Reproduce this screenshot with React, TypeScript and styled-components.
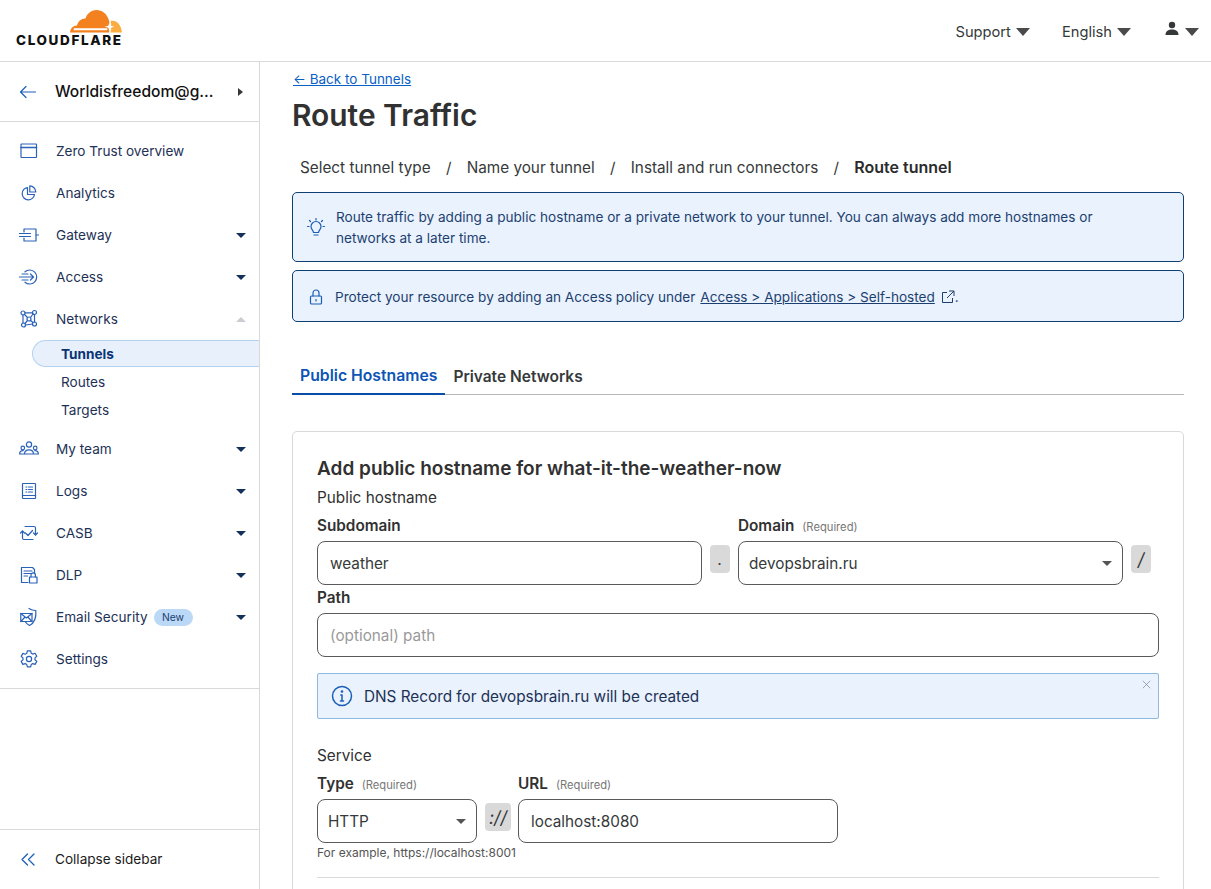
import React from "react";
import styled, { createGlobalStyle } from "styled-components";

const Global = createGlobalStyle`
  html, body { margin: 0; padding: 0; background: #fff; height: 100%; overflow: hidden; }
  body { font-family: Inter, "Liberation Sans", sans-serif; color: #313131; }
  #root { height: 100%; }
  * { box-sizing: border-box; }
`;

const Page = styled.div`
  width: 1211px; height: 889px; display: flex; flex-direction: column; overflow: hidden;
`;
const Header = styled.header`
  height: 62px; flex: none; display: flex; align-items: center; justify-content: space-between;
  border-bottom: 1px solid #d9d9d9; padding: 0 12px 0 16px;
`;
const Logo = styled.div`
  width: 106px; align-self: flex-start; padding-top: 10px; display: flex; flex-direction: column; align-items: flex-end;
`;
const LogoText = styled.span`
  font-family: Inter, "Liberation Sans", sans-serif; font-weight: 800; font-size: 13.5px; line-height: 11px;
  letter-spacing: 1.62px; color: #111; width: 106px; white-space: nowrap; margin-top: 2px;
`;
const HeaderMenu = styled.nav`
  display: flex; align-items: center; font-size: 14.7px; color: #36393a; padding-top: 2px;
`;
const HeaderItem = styled.span<{ $gap: number }>`
  display: flex; align-items: center; gap: 5px; margin-right: ${(p) => p.$gap}px;
`;
const UserIcon = styled.svg`
  width: 16px; height: 16px; margin-top: -5px;
`;
const Caret = styled.i<{ $w?: number; $h?: number; $c?: string; $up?: boolean }>`
  display: block; width: 0; height: 0;
  border-left: ${(p) => p.$w ?? 7}px solid transparent;
  border-right: ${(p) => p.$w ?? 7}px solid transparent;
  ${(p) => p.$up
    ? `border-bottom: ${p.$h ?? 8}px solid ${p.$c ?? "#4a4a4a"};`
    : `border-top: ${p.$h ?? 8}px solid ${p.$c ?? "#4a4a4a"};`}
`;
const Body = styled.div`
  display: flex; flex: 1; min-height: 0;
`;
const Sidebar = styled.aside`
  width: 260px; flex: none; border-right: 1px solid #d9d9d9; display: flex; flex-direction: column;
`;
const Account = styled.div`
  height: 60px; flex: none; display: flex; align-items: center; padding: 0 16px 0 19px;
  border-bottom: 1px solid #d9d9d9; font-size: 15.6px; font-weight: 500; color: #111;
`;
const AccountName = styled.span`
  flex: 1; margin-left: 18px; white-space: nowrap;
`;
const SideArrow = styled.i`
  display: block; width: 0; height: 0; border-top: 4px solid transparent; border-bottom: 4px solid transparent;
  border-left: 5px solid #36393a;
`;
const Nav = styled.nav`
  padding-top: 8px; padding-bottom: 8px; border-bottom: 1px solid #d9d9d9;
`;
const NavRow = styled.div`
  height: 42px; display: flex; align-items: center; padding: 0 13px 0 19px;
  font-size: 13.6px; color: #1d3156;
`;
const NavIcon = styled.svg`
  width: 20px; height: 20px; flex: none; margin-right: 17px; color: #2a62b8;
  fill: none; stroke: currentColor; stroke-width: 1.2; stroke-linecap: round; stroke-linejoin: round;
`;
const NavLabel = styled.span`
  flex: 1; display: flex; align-items: center; gap: 6px; white-space: nowrap;
`;
const Badge = styled.span`
  background: #bcd8f7; color: #1d3f70; font-size: 10.3px; font-weight: 400; line-height: 17px; height: 17px;
  padding: 0 8.5px; border-radius: 9px;
`;
const SubList = styled.div`
  display: flex; flex-direction: column; margin-bottom: 4px;
`;
const SubRow = styled.div<{ $active?: boolean }>`
  height: ${(p) => (p.$active ? 27 : 28)}px; margin-left: 32px; padding-left: ${(p) => (p.$active ? 28 : 29)}px;
  display: flex; align-items: center; font-size: 13.6px;
  color: ${(p) => (p.$active ? "#0a3475" : "#1d3156")};
  font-weight: ${(p) => (p.$active ? 700 : 400)};
  ${(p) => p.$active && `background:#e8f1fb;border:1px solid #b4d2f0;border-right:none;border-radius:14px 0 0 14px;margin-bottom:1px;`}
`;
const Spacer = styled.div`flex: 1;`;
const Collapse = styled.div`
  height: 60px; flex: none; border-top: 1px solid #d9d9d9; display: flex; align-items: center;
  padding: 0 0 2px 19px; font-size: 13.6px; color: #1b1b1b;
`;
const CollapseLabel = styled.span`margin-left: 18px;`;
const Main = styled.main`
  flex: 1; min-width: 0; padding: 9px 27px 0 32px; overflow: hidden;
`;
const BackLink = styled.a`
  display: block; font-size: 13.5px; line-height: 17px; color: #0a5fc4; text-decoration: underline; margin-left: 1px;
`;
const Title = styled.h1`
  font-size: 29.9px; font-weight: 600; line-height: 40px; margin: 7px 0 0; color: #313131;
`;
const Steps = styled.ol`
  list-style: none; margin: 22px 0 0; padding: 0 0 0 8px; display: flex; align-items: baseline; font-size: 15.3px; line-height: 20px; color: #36393a;
  height: 20px;
`;
const Step = styled.li<{ $current?: boolean }>`
  font-weight: ${(p) => (p.$current ? 600 : 400)};
  font-size: ${(p) => (p.$current ? 16 : 15.3)}px;
  color: ${(p) => (p.$current ? "#2b2b2b" : "#36393a")};
`;
const StepSep = styled.li`
  margin: 0 15.25px;
`;
const Callout = styled.div<{ $h: number; $gap: number; $pl: number }>`
  height: ${(p) => p.$h}px; margin-top: ${(p) => p.$gap}px; display: flex; align-items: center;
  padding-left: ${(p) => p.$pl}px; padding-top: 2px; background: #e9f2fd; border: 1px solid #0f3f73; border-radius: 5px;
  font-size: 13.6px; line-height: 21px; color: #1d3f70;
`;
const CalloutIcon = styled.svg<{ $mr: number }>`
  width: 20px; height: 20px; flex: none; margin-right: ${(p) => p.$mr}px; color: #1c5fb8;
  fill: none; stroke: currentColor; stroke-width: 1.2; stroke-linecap: round; stroke-linejoin: round;
`;
const CalloutText = styled.div`
  max-width: 790px;
`;
const CalloutLink = styled.a`
  text-decoration: underline; margin-left: 5px;
`;
const ExternalIcon = styled.svg`
  width: 14px; height: 14px; margin-left: 6px; fill: none; stroke: #1d3f70; stroke-width: 1;
`;
const TabBar = styled.div`
  margin-top: 34px; display: flex; height: 39px; border-bottom: 1px solid #b6b6b6;
`;
const Tab = styled.div<{ $active?: boolean }>`
  font-size: ${(p) => (p.$active ? 15.75 : 15.5)}px; font-weight: 600; padding: 0 8px; line-height: 42px; height: 39px;
  color: ${(p) => (p.$active ? "#0d55b5" : "#36393a")};
  ${(p) => p.$active && `border-bottom: 2px solid #0a4ea8;line-height:40px;`}
`;
const Card = styled.section`
  margin-top: 36px; border: 1px solid #d9d9d9; border-radius: 5px; padding: 25px 24px 0; height: 600px;
`;
const CardTitle = styled.h2`
  font-size: 19px; font-weight: 600; line-height: 24px; margin: 0; color: #313131;
`;
const Section = styled.div<{ $mt?: number }>`
  font-size: 15.3px; line-height: 22px; height: 20px; color: #313131; margin-top: ${(p) => p.$mt ?? 6}px;
`;
const FieldRow = styled.div<{ $mt?: number }>`
  display: flex; align-items: flex-start; margin-top: ${(p) => p.$mt ?? 8}px;
`;
const Field = styled.div<{ $w: number }>`
  width: ${(p) => p.$w}px; flex: none;
`;
const Label = styled.div`
  display: flex; align-items: baseline; gap: 8px; font-size: 15.3px; font-weight: 600; line-height: 22px; color: #313131; height: 20px;
`;
const Req = styled.span`
  font-size: 11.2px; font-weight: 400; color: #777;
`;
const InputBox = styled.div<{ $muted?: boolean }>`
  margin-top: 6px; height: 44px; border: 1px solid #5a5a5a; border-radius: 8px; background: #fff;
  display: flex; align-items: center; justify-content: space-between; padding: 0 10px 0 12px; font-size: 15.3px;
  color: ${(p) => (p.$muted ? "#9a9a9a" : "#36393a")};
`;
const SelectBox = styled(InputBox)`
  padding-left: 10px;
`;
const Addon = styled.div<{ $w: number; $ml: number; $mr: number; $size?: number }>`
  width: ${(p) => p.$w}px; height: 28px; margin: 30px ${(p) => p.$mr}px 0 ${(p) => p.$ml}px; flex: none; background: #d9d9d9; border-radius: 4px;
  display: flex; align-items: center; justify-content: center; font-size: ${(p) => p.$size ?? 16}px; color: #36393a; font-style: italic;
`;
const Notice = styled.div`
  position: relative; margin-top: 16px; height: 46px; display: flex; align-items: center; padding-left: 13px;
  background: #e9f2fd; border: 1px solid #8cb8e2; border-radius: 2px; font-size: 15.3px; color: #1d3156;
`;
const NoticeClose = styled.svg`
  position: absolute; top: 6px; right: 7px; width: 9px; height: 9px; stroke: #7d8a99; stroke-width: 0.9; fill: none;
`;
const NoticeIcon = styled.svg`
  width: 22px; height: 22px; flex: none; margin-right: 11px; fill: none; stroke: #1c5fb8; stroke-width: 1.5; stroke-linecap: round;
`;
const Hint = styled.div`
  font-size: 12px; line-height: 15px; color: #555; margin-top: 2px; white-space: nowrap;
`;
const Divider = styled.hr`
  border: 0; border-top: 1px solid #d9d9d9; margin: 17px 0 0;
`;

const navIcons: Record<string, React.ReactNode> = {
  overview: <><rect x="2" y="3" width="15.5" height="13.5" rx="0.5" /><path d="M2 6.5h15.5" strokeWidth="1.6" /></>,
  analytics: <><path d="M8.5 4.5a6.2 6.2 0 1 0 7 7h-7z" /><path d="M10.8 2.8a6.4 6.4 0 0 1 6 6.2h-6z" /></>,
  gateway: <><path d="M5 7V4h12v12H5v-3" /><path d="M0.5 8.5h11M0.5 11.5h11M17 10h2.5" /></>,
  access: <><path d="M6 4.8a7 7 0 1 1 0 10.4" /><path d="M3 7h6M0.5 10h14M3 13h6M11.5 7l3 3-3 3" /></>,
  networks: <><circle cx="4" cy="4" r="2" /><circle cx="15.5" cy="3.5" r="2" /><circle cx="4.5" cy="16" r="2" /><circle cx="15.5" cy="15" r="2" /><circle cx="10" cy="10" r="2" /><path d="M5.5 5.5 8.5 8.5M14 5 11.5 8.5M8.5 11.5 6 14.5M11.5 11.5 14 13.5M6 3.8h7.5M4 6v8M15.5 5.5v7.5M6.5 16l7-1" /></>,
  team: <><circle cx="10" cy="5.5" r="2.6" /><circle cx="3.8" cy="9" r="1.8" /><circle cx="16.2" cy="9" r="1.8" /><path d="M5.5 15c0-5.5 9-5.5 9 0zM0.6 15c0-2.8 2-3.6 3.6-3.3M19.4 15c0-2.8-2-3.6-3.6-3.3M0.6 15h4.9M14.5 15h4.9" /></>,
  logs: <><rect x="3.5" y="2.5" width="13" height="15" rx="0.5" /><path d="M3.5 14.5h13M7 6h.8M7 8.5h.8M7 11h.8M9.5 6h4M9.5 8.5h4M9.5 11h4" /></>,
  casb: <><path d="M6 3.5h9a1.5 1.5 0 0 1 1.5 1.5v7" /><path d="M14 16.5H5a1.5 1.5 0 0 1-1.5-1.5V8" /><path d="M1.5 10l2-2 2 2M14.5 10l2 2 2-2" /><path d="m6.5 10 2.5 2.5 4.5-5" /></>,
  dlp: <><path d="M9 17.5H2.5V2.5h11l2 2v4" /><path d="M5 6h8M5 8.5h8M5 11h3.5" /><rect x="10.5" y="12" width="7.5" height="6" /><path d="M12 12v-2a2.2 2.2 0 0 1 4.4 0v2" /></>,
  email: <><path d="M10 1.5c2 1.5 4.5 2 6.8 2 .6 6.5-1.5 12.5-6.3 15-1.5-.8-3-1.8-4-3.5" /><rect x="1.8" y="6.5" width="11.2" height="8" /><path d="m1.8 6.5 5.6 4.5 5.6-4.5M1.8 14.5 6 10M13 14.5 8.8 10" /></>,
  settings: <><circle cx="10" cy="10" r="2.6" /><path d="M8.3 1.8h3.4l.5 2.4 1.6.9 2.3-.8 1.7 3-1.8 1.6v1.9l1.8 1.6-1.7 3-2.3-.8-1.6.9-.5 2.4H8.3l-.5-2.4-1.6-.9-2.3.8-1.7-3 1.8-1.6V9l-1.8-1.6 1.7-3 2.3.8 1.6-.9z" /></>,
};

function NavItem({ icon, label, caret, up, badge }: { icon: string; label: string; caret?: boolean; up?: boolean; badge?: string }) {
  return (
    <NavRow>
      <NavIcon viewBox="0 0 20 20">{navIcons[icon]}</NavIcon>
      <NavLabel>{label}{badge && <Badge>{badge}</Badge>}</NavLabel>
      {caret && <Caret $w={5} $h={5} $c={up ? "#c9ced4" : "#14315c"} $up={up} />}
    </NavRow>
  );
}

export default function App() {
  return (
    <Page>
      <Global />
      <Header>
        <Logo>
          <svg width="52" height="23" viewBox="0 0 52 23">
            <path fill="#f48120" d="M0 22.5C.5 18.5 3 15.5 7 15.5C8 11 12 8 15.5 8.5C17 3 22 0 26.5 0C32 0 37 3.5 39 10.5C40 14 40 19 39 22.5z" />
            <path fill="#fbad41" d="M40.5 22.5C41.5 18 41.5 14 40.5 11C46 9.5 51 14 52 22.5z" />
            <path fill="#fff" d="M4 18.2H35.5C37 18.2 37.5 18.7 37.5 19.2C37.5 19.8 37 20.2 35.5 20.2H3.5zM39.5 12.5l1.2 3.3 3.8 1-3.8 1-1.2 3.5-1.2-3.5-3.8-1 3.8-1z" />
          </svg>
          <LogoText>CLOUDFLARE</LogoText>
        </Logo>
        <HeaderMenu>
          <HeaderItem $gap={32}>Support <Caret /></HeaderItem>
          <HeaderItem $gap={33}>English <Caret /></HeaderItem>
          <HeaderItem $gap={0}>
            <UserIcon viewBox="0 0 16 16">
              <circle cx="8" cy="4" r="3.2" fill="#36393a" />
              <path d="M1.5 14c0-4 3-5.5 6.5-5.5s6.5 1.5 6.5 5.5z" fill="#36393a" />
            </UserIcon>
            <Caret />
          </HeaderItem>
        </HeaderMenu>
      </Header>
      <Body>
        <Sidebar>
          <Account>
            <svg width="18" height="18" viewBox="0 0 18 18" fill="none" stroke="#1c5fb8" strokeWidth="1.2" strokeLinecap="round" strokeLinejoin="round">
              <path d="M1.5 9h15M7 3.5 1.5 9 7 14.5" />
            </svg>
            <AccountName>Worldisfreedom@g...</AccountName>
            <SideArrow />
          </Account>
          <Nav>
            <NavItem icon="overview" label="Zero Trust overview" />
            <NavItem icon="analytics" label="Analytics" />
            <NavItem icon="gateway" label="Gateway" caret />
            <NavItem icon="access" label="Access" caret />
            <NavItem icon="networks" label="Networks" caret up />
            <SubList>
              <SubRow $active>Tunnels</SubRow>
              <SubRow>Routes</SubRow>
              <SubRow>Targets</SubRow>
            </SubList>
            <NavItem icon="team" label="My team" caret />
            <NavItem icon="logs" label="Logs" caret />
            <NavItem icon="casb" label="CASB" caret />
            <NavItem icon="dlp" label="DLP" caret />
            <NavItem icon="email" label="Email Security" caret badge="New" />
            <NavItem icon="settings" label="Settings" />
          </Nav>
          <Spacer />
          <Collapse>
            <svg width="18" height="18" viewBox="0 0 18 18" fill="none" stroke="#1c5fb8" strokeWidth="1.3" strokeLinecap="round" strokeLinejoin="round">
              <path d="M8.5 4 3 9.5l5.5 5.5M15 4 9.5 9.5l5.5 5.5" />
            </svg>
            <CollapseLabel>Collapse sidebar</CollapseLabel>
          </Collapse>
        </Sidebar>
        <Main>
          <BackLink>← Back to Tunnels</BackLink>
          <Title>Route Traffic</Title>
          <Steps>
            <Step>Select tunnel type</Step><StepSep>/</StepSep>
            <Step>Name your tunnel</Step><StepSep>/</StepSep>
            <Step>Install and run connectors</Step><StepSep>/</StepSep>
            <Step $current>Route tunnel</Step>
          </Steps>
          <Callout $h={70} $gap={15} $pl={13}>
            <CalloutIcon $mr={10} viewBox="0 0 20 20">
              <path d="M7.5 14.5c0-2-2.500-3-2.500-6a5 5 0 0 1 10 0c0 3-2.500 4-2.500 6zM8 17h4M10 .5v1.500M1.500 8.500h1.500M17 8.500h1.500M3.500 2.500l1 1M16.500 2.500l-1 1" />
            </CalloutIcon>
            <CalloutText>Route traffic by adding a public hostname or a private network to your tunnel. You can always add more hostnames or networks at a later time.</CalloutText>
          </Callout>
          <Callout $h={52} $gap={8} $pl={13}>
            <CalloutIcon $mr={9} viewBox="0 0 20 20">
              <rect x="4.5" y="9" width="11" height="8" rx="1" /><path d="M7 9V6a3 3 0 0 1 6 0v3" /><path d="M10 12.5v1.5" />
            </CalloutIcon>
            Protect your resource by adding an Access policy under
            <CalloutLink>Access &gt; Applications &gt; Self-hosted</CalloutLink>
            <ExternalIcon viewBox="0 0 14 14">
              <path d="M6 2.5H1.5v10h10V8M8 1h5v5M13 1 6 8" />
            </ExternalIcon>
            .
          </Callout>
          <TabBar>
            <Tab $active>Public Hostnames</Tab>
            <Tab>Private Networks</Tab>
          </TabBar>
          <Card>
            <CardTitle>Add public hostname for what-it-the-weather-now</CardTitle>
            <Section $mt={6}>Public hostname</Section>
            <FieldRow $mt={8}>
              <Field $w={385}>
                <Label>Subdomain</Label>
                <InputBox>weather</InputBox>
              </Field>
              <Addon $w={20} $ml={8} $mr={8}>.</Addon>
              <Field $w={385}>
                <Label>Domain <Req>(Required)</Req></Label>
                <SelectBox>devopsbrain.ru <Caret $w={5} $h={5} $c="#555" /></SelectBox>
              </Field>
              <Addon $w={20} $ml={8} $mr={0} $size={18}>/</Addon>
            </FieldRow>
            <FieldRow $mt={2}>
              <Field $w={842}>
                <Label>Path</Label>
                <InputBox $muted>(optional) path</InputBox>
              </Field>
            </FieldRow>
            <Notice>
              <NoticeIcon viewBox="0 0 22 22">
                <circle cx="11" cy="11" r="9.5" />
                <path d="M11 10v6M9.5 16h3M9.8 10H11" />
                <circle cx="11" cy="6.5" r="0.6" />
              </NoticeIcon>
              DNS Record for devopsbrain.ru will be created
              <NoticeClose viewBox="0 0 11 11"><path d="M1 1l9 9M10 1l-9 9" /></NoticeClose>
            </Notice>
            <Section $mt={26}>Service</Section>
            <FieldRow $mt={8}>
              <Field $w={160}>
                <Label>Type <Req>(Required)</Req></Label>
                <SelectBox>HTTP <Caret $w={5} $h={5} $c="#555" /></SelectBox>
                <Hint>For example, https://localhost:8001</Hint>
              </Field>
              <Addon $w={26} $ml={8} $mr={7} $size={18}>://</Addon>
              <Field $w={320}>
                <Label>URL <Req>(Required)</Req></Label>
                <InputBox>localhost:8080</InputBox>
              </Field>
            </FieldRow>
            <Divider />
          </Card>
        </Main>
      </Body>
    </Page>
  );
}
